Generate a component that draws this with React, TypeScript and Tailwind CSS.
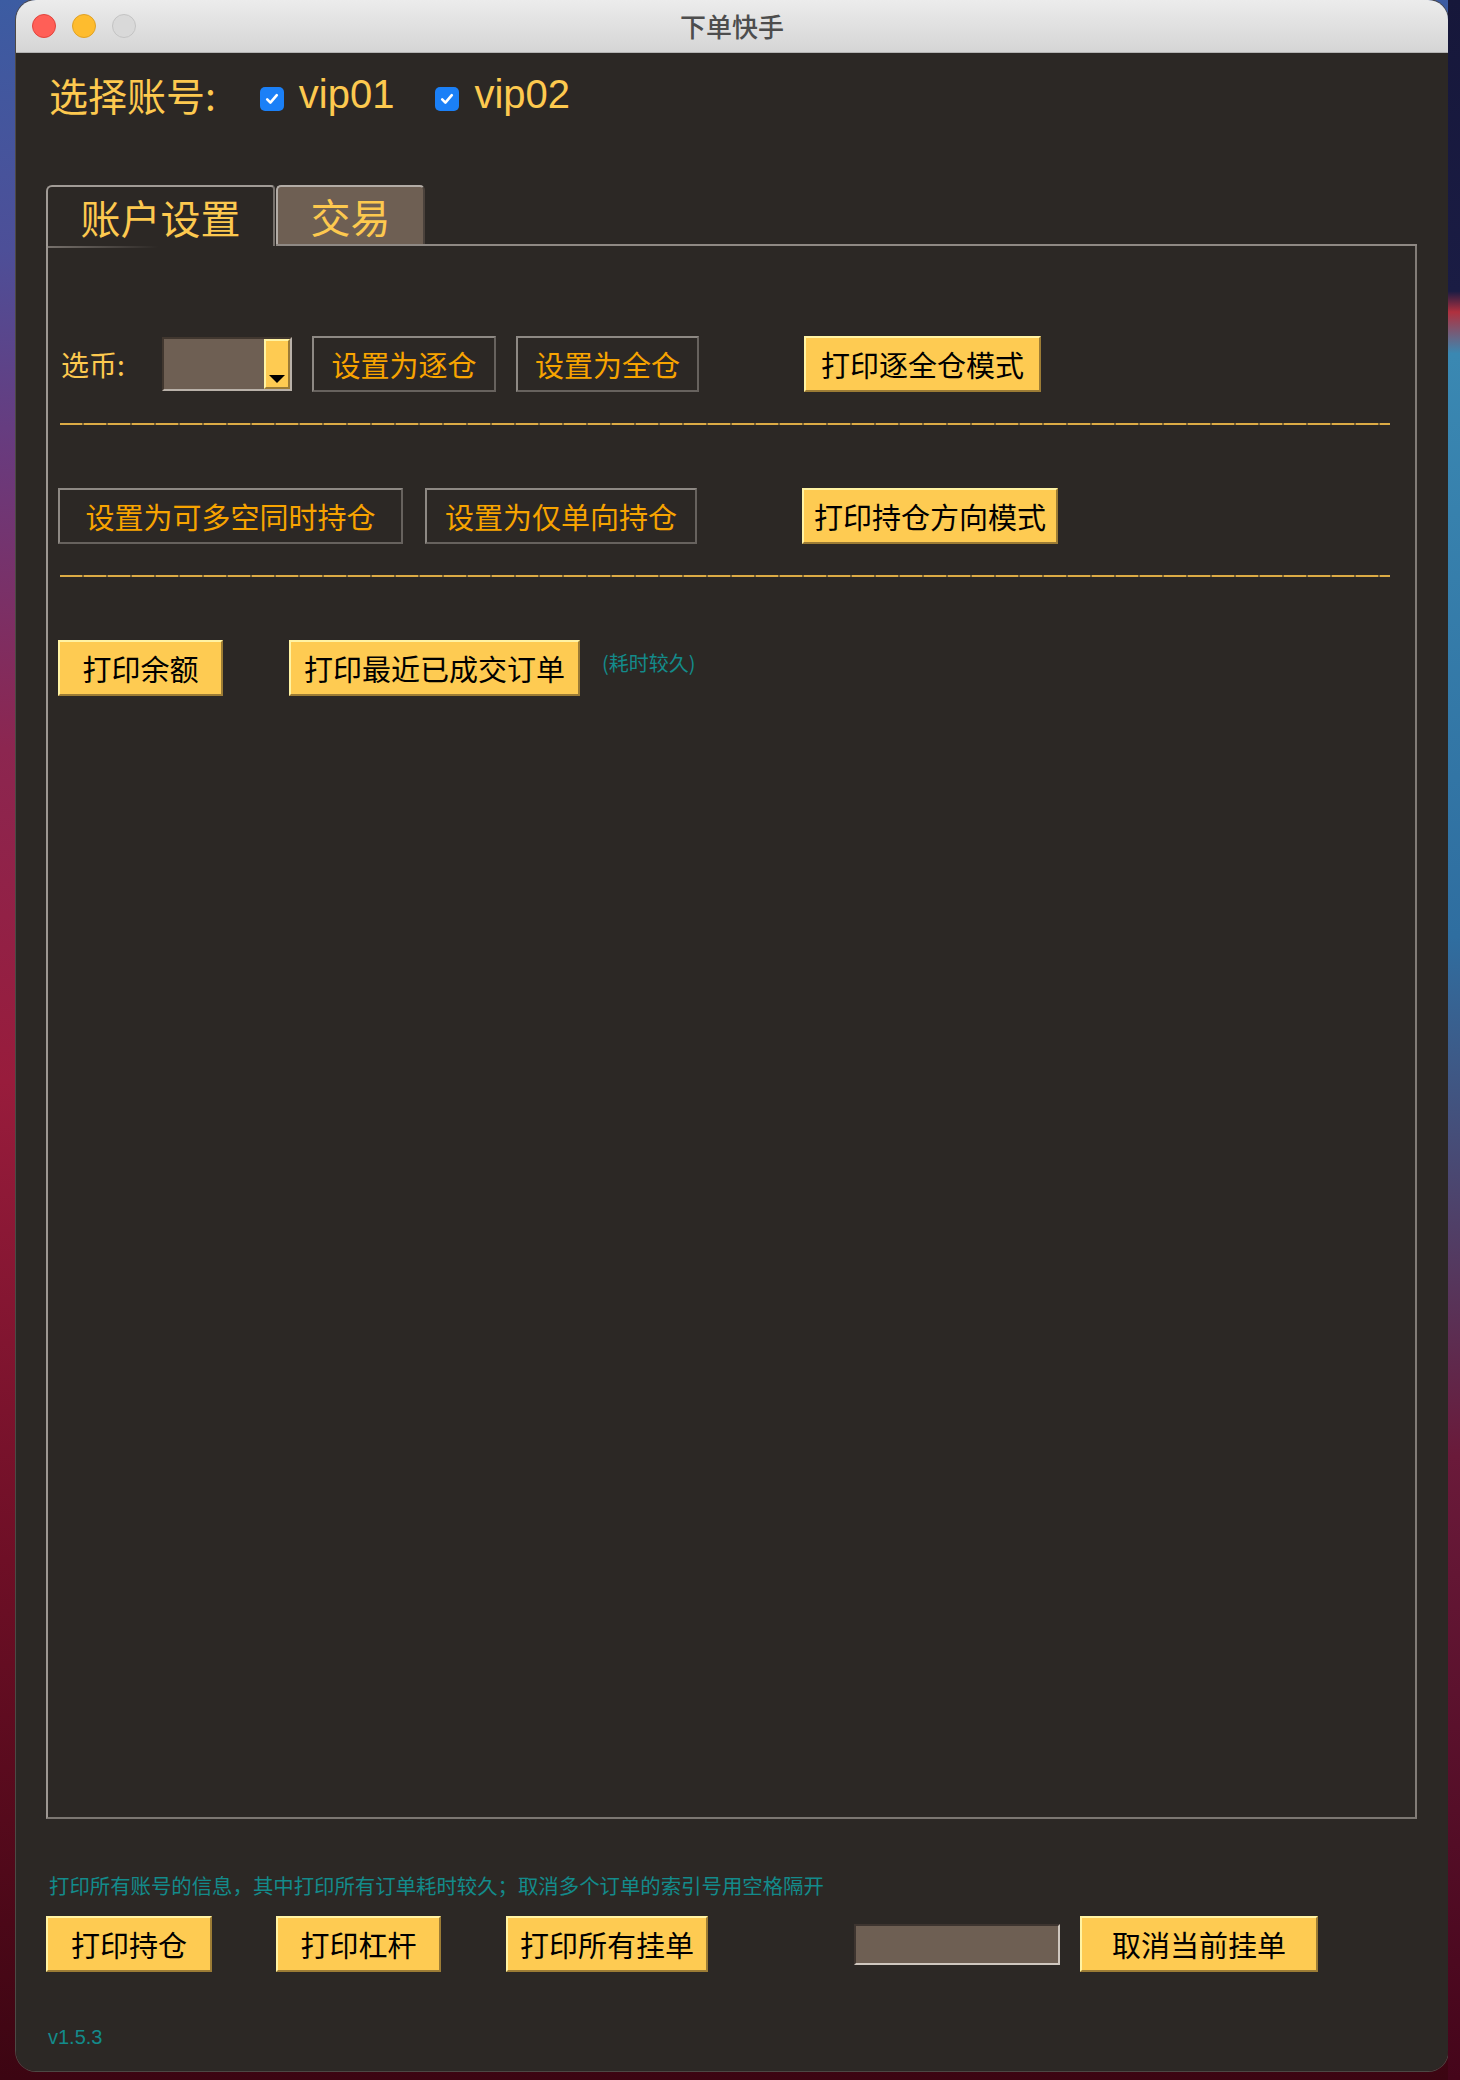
import type { ReactNode } from 'react';

const CJK = "font-['Noto_Sans_CJK_SC',sans-serif]";
const LATIN = "font-['Liberation_Sans','Noto_Sans_CJK_SC',sans-serif]";

const yellowBtn =
    'flex h-[56px] shrink-0 items-center justify-center whitespace-nowrap border-2 border-t-[#fff3a3] border-l-[#fff3a3] border-b-[#9c7c35] border-r-[#9c7c35] bg-[#fecb52] text-[29px] leading-none text-black';
const outlineBtn =
    'flex h-[56px] shrink-0 items-center justify-center whitespace-nowrap border-2 border-t-[#8e8984] border-l-[#8e8984] border-b-[#67625e] border-r-[#67625e] text-[29px] leading-none text-[#f8a400]';
const dashed =
    'h-[2px] bg-[repeating-linear-gradient(90deg,#dcab45_0px,#dcab45_22px,#7a6232_22px,#7a6232_24px)]';

function Check() {
    return (
        <span className="mt-[10px] flex h-[24px] w-[24px] shrink-0 items-center justify-center rounded-[5px] bg-[#1b80f7]">
            <svg width="16" height="16" viewBox="0 0 16 16" fill="none">
                <path d="M3.2 8.4 6.4 11.6 12.8 4.2" stroke="#fff" strokeWidth="2.6" strokeLinecap="round" strokeLinejoin="round" />
            </svg>
        </span>
    );
}

function Btn({ className, children }: { className: string; children: ReactNode }) {
    return (
        <button type="button" className={className}>
            {children}
        </button>
    );
}

export default function App() {
    return (
        <div className={`flex h-[2080px] w-[1460px] overflow-hidden bg-[linear-gradient(180deg,#3c5ca2_0%,#4d4f98_12%,#6a3a7c_22%,#8c2650_36%,#981c3c_52%,#6e0f26_75%,#3c0512_100%)] ${CJK}`}>
            <div className="w-[16px] shrink-0" />
            <div className="flex h-[2071px] w-[1432px] shrink-0 flex-col overflow-hidden rounded-[20px] shadow-[0_0_0_1px_#4d4844]">
                {/* title bar */}
                <div className="grid h-[53px] shrink-0 grid-cols-[1fr_auto_1fr] items-center border-b border-[#b3b3b3] bg-[linear-gradient(180deg,#ececec,#d5d5d5)]">
                    <div className="flex items-center gap-[16px] pl-[16px]">
                        <span className="h-[24px] w-[24px] rounded-full border border-[#e1443d] bg-[#ff5f57]" />
                        <span className="h-[24px] w-[24px] rounded-full border border-[#dfa125] bg-[#febc2e]" />
                        <span className="h-[24px] w-[24px] rounded-full border border-[#c3c3c3] bg-[#d9d9d9]" />
                    </div>
                    <div className="text-[26px] font-medium leading-none text-[#4d4d4d]">下单快手</div>
                    <div />
                </div>

                {/* body */}
                <div className="flex flex-1 flex-col bg-[#2c2825] pl-[30px]">
                    <div className="mt-[16px] flex h-[50px] items-center text-[#fdc94f]">
                        <span className="ml-[3px] text-[39px] leading-none">选择账号:</span>
                        <span className="ml-[44px]"><Check /></span>
                        <span className={`ml-[15px] text-[40px] leading-none ${LATIN}`}>vip01</span>
                        <span className="ml-[41px]"><Check /></span>
                        <span className={`ml-[15px] text-[40px] leading-none ${LATIN}`}>vip02</span>
                    </div>

                    {/* tabs */}
                    <div className="mt-[66px] flex h-[61px] w-[1371px] shrink-0">
                        <div className="flex w-[229px] shrink-0 items-center justify-center rounded-tl-[6px] rounded-tr-[4px] border-l-2 border-r-2 border-t-2 border-l-[#a19b96] border-r-[#77716c] border-t-[#a19b96] text-[40px] leading-none text-[#fdc94f]">
                            账户设置
                        </div>
                        <div className="ml-[1px] flex flex-1 border-b-2 border-[#8f8984]">
                            <div className="flex w-[149px] items-center justify-center rounded-t-[5px] border-l-2 border-r-2 border-t-2 border-l-[#b3aca6] border-r-[#4b423c] border-t-[#b3aca6] bg-[#6e5f53] text-[40px] leading-none text-[#fdc94f]">
                                交易
                            </div>
                        </div>
                    </div>

                    {/* panel */}
                    <div className="flex h-[1573px] w-[1371px] shrink-0 flex-col border-b-2 border-l-2 border-r-2 border-b-[#7c7772] border-l-[#9d9792] border-r-[#827c77]">
                        <div className="h-[2px] w-[110px] bg-[linear-gradient(90deg,#77716c,transparent)]" />

                        <div className="mt-[88px] flex h-[56px] items-center">
                            <span className="ml-[13px] w-[101px] shrink-0 text-[28px] leading-none text-[#fdc94f]">选币:</span>
                            <div className="flex h-[54px] w-[130px] shrink-0 border-2 border-t-[#41372f] border-l-[#41372f] border-b-[#b9b1a9] border-r-[#b9b1a9] bg-[#6e5f53]">
                                <div className="flex-1" />
                                <div className="flex w-[26px] items-end justify-center border-2 border-t-[#fff3a3] border-l-[#fff3a3] border-b-[#9a7a36] border-r-[#9a7a36] bg-[#fecb52] pb-[4px]">
                                    <svg width="16" height="8" viewBox="0 0 16 8">
                                        <path d="M0 0h16L8 8z" fill="#000" />
                                    </svg>
                                </div>
                            </div>
                            <div className="ml-[20px]"><Btn className={`${outlineBtn} w-[184px]`}>设置为逐仓</Btn></div>
                            <div className="ml-[20px]"><Btn className={`${outlineBtn} w-[183px]`}>设置为全仓</Btn></div>
                            <div className="ml-[105px]"><Btn className={`${yellowBtn} w-[237px]`}>打印逐全仓模式</Btn></div>
                        </div>

                        <div className={`ml-[12px] mt-[31px] w-[1330px] ${dashed}`} />

                        <div className="mt-[63px] flex h-[56px] items-center">
                            <div className="ml-[10px]"><Btn className={`${outlineBtn} w-[345px]`}>设置为可多空同时持仓</Btn></div>
                            <div className="ml-[22px]"><Btn className={`${outlineBtn} w-[272px]`}>设置为仅单向持仓</Btn></div>
                            <div className="ml-[105px]"><Btn className={`${yellowBtn} w-[256px]`}>打印持仓方向模式</Btn></div>
                        </div>

                        <div className={`ml-[12px] mt-[31px] w-[1330px] ${dashed}`} />

                        <div className="mt-[63px] flex h-[56px] items-center">
                            <div className="ml-[10px]"><Btn className={`${yellowBtn} w-[165px]`}>打印余额</Btn></div>
                            <div className="ml-[66px]"><Btn className={`${yellowBtn} w-[291px]`}>打印最近已成交订单</Btn></div>
                            <span className="mb-[10px] ml-[22px] text-[20px] leading-none text-[#138b8b]">(耗时较久)</span>
                        </div>
                    </div>

                    {/* bottom */}
                    <div className="ml-[3px] mt-[52px] text-[20.4px] leading-[28px] text-[#138b8b]">
                        打印所有账号的信息，其中打印所有订单耗时较久；取消多个订单的索引号用空格隔开
                    </div>
                    <div className="mt-[17px] flex h-[56px] items-center">
                        <Btn className={`${yellowBtn} w-[166px]`}>打印持仓</Btn>
                        <div className="ml-[64px]"><Btn className={`${yellowBtn} w-[165px]`}>打印杠杆</Btn></div>
                        <div className="ml-[65px]"><Btn className={`${yellowBtn} w-[202px]`}>打印所有挂单</Btn></div>
                        <div className="ml-[146px] h-[41px] w-[206px] shrink-0 border-2 border-t-[#3e3530] border-l-[#3e3530] border-b-[#cfc7bf] border-r-[#cfc7bf] bg-[#6e5f53]" />
                        <div className="ml-[20px]"><Btn className={`${yellowBtn} w-[238px]`}>取消当前挂单</Btn></div>
                    </div>
                    <div className={`ml-[2px] mt-[51px] text-[20px] leading-[28px] text-[#138b8b] ${LATIN}`}>v1.5.3</div>
                </div>
            </div>
            <div className="flex-1 bg-[linear-gradient(180deg,#16173a_0%,#1a1c44_14%,#b0303e_15%,#3a88b2_17%,#2f6ea0_45%,#6a1a3a_70%,#45051a_100%)]" />
        </div>
    );
}
